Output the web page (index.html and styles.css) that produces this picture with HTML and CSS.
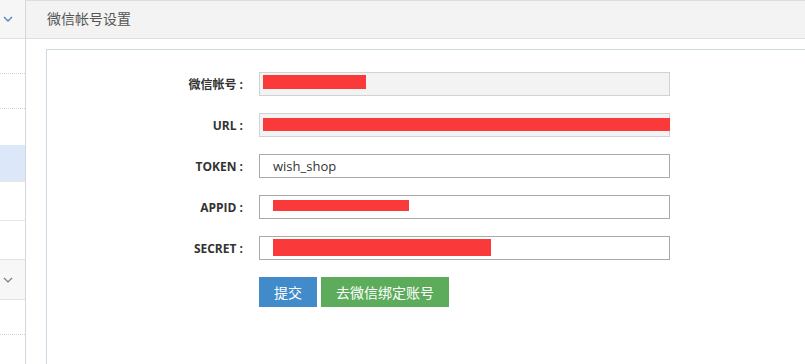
FILE: index.html
```html
<!DOCTYPE html>
<html lang="zh-CN">
  <head>
    <meta charset="UTF-8" />
    <title>微信帐号设置</title>
    <link rel="stylesheet" href="styles.css">
  </head>
  <body>
    <div class="layout">
      <!-- Left menu (mostly cut off) -->
      <aside class="sidebar">
        <div class="menu-head">
          <svg class="chev" width="10" height="6" viewBox="0 0 10 6"><path d="M1 1l4 4 4-4" fill="none" stroke="#4a87c0" stroke-width="1.3"/></svg>
        </div>
        <div class="menu-item dotted"></div>
        <div class="menu-item dotted"></div>
        <div class="menu-item gap"></div>
        <div class="menu-item active"></div>
        <div class="menu-item solid"></div>
        <div class="menu-item solid"></div>
        <div class="menu-head sub">
          <svg class="chev" width="10" height="6" viewBox="0 0 10 6"><path d="M1 1l4 4 4-4" fill="none" stroke="#777" stroke-width="1.1"/></svg>
        </div>
        <div class="menu-item dotted"></div>
      </aside>

      <main class="content">
        <div class="page-header">微信帐号设置</div>
        <div class="panel">
          <form class="form">
            <div class="form-row">
              <label>微信帐号 :</label>
              <div class="field readonly"><span class="mask" style="width:103px"></span></div>
            </div>
            <div class="form-row">
              <label>URL :</label>
              <div class="field readonly"><span class="mask url"></span></div>
            </div>
            <div class="form-row">
              <label>TOKEN :</label>
              <div class="field">wish_shop</div>
            </div>
            <div class="form-row">
              <label>APPID :</label>
              <div class="field"><span class="mask inset" style="width:136px"></span></div>
            </div>
            <div class="form-row">
              <label>SECRET :</label>
              <div class="field"><span class="mask inset tall" style="width:218px"></span></div>
            </div>
            <div class="form-actions">
              <button type="button" class="btn btn-blue">提交</button>
              <button type="button" class="btn btn-green">去微信绑定账号</button>
            </div>
          </form>
        </div>
      </main>
    </div>
  </body>
</html>
```

FILE: styles.css
```css
* {
  margin: 0;
  padding: 0;
  box-sizing: border-box;
}

body {
  font-family: "Open Sans", "Noto Sans CJK SC", sans-serif;
  font-size: 12px;
  color: #333;
  background: #fff;
}

.layout {
  display: flex;
  height: 364px;
  overflow: hidden;
}

/* sidebar */
.sidebar {
  width: 26px;
  flex-shrink: 0;
  border-right: 1px solid #d4d8dc;
}

.menu-head {
  height: 39px;
  background: #f6f6f6;
  border-bottom: 1px solid #e2e2e2;
  display: flex;
  align-items: center;
  padding-left: 3px;
}

.menu-head.sub {
  height: 41px;
  background: #f7f7f7;
  border-top: 1px solid #e2e2e2;
  color: #777;
}

.menu-item {
  height: 35px;
}

.menu-item.dotted {
  border-bottom: 1px dotted #d6d6d6;
}

.menu-item.gap {
  height: 36px;
}

.menu-item.active {
  height: 36px;
  background: #dce8fa;
}

.menu-item.solid {
  height: 39px;
  border-top: 1px solid #e6e6e6;
}

.menu-item.solid:first-of-type {
  border-top: none;
}

/* main */
.content {
  flex: 1;
  display: flex;
  flex-direction: column;
}

.page-header {
  height: 39px;
  background: #f3f3f3;
  border-top: 1px solid #dedede;
  border-bottom: 1px solid #dedede;
  padding-left: 21px;
  line-height: 34px;
  font-family: "Noto Sans CJK SC", sans-serif;
  font-size: 14px;
  color: #555;
}

.panel {
  flex: 1;
  margin: 10px 0 0 20px;
  border-top: 1px solid #cfdae0;
  border-left: 1px solid #cfdae0;
  padding-top: 22px;
}

.form-row {
  display: flex;
  align-items: center;
  height: 24px;
  margin-bottom: 17px;
}

.form-row label {
  width: 199px;
  padding-right: 3px;
  text-align: right;
  font-weight: 700;
  font-size: 12px;
  color: #333;
  white-space: pre;
}

.field {
  margin-left: 13px;
  width: 411px;
  height: 24px;
  border: 1px solid #aaa;
  background: #fff;
  padding-left: 13px;
  line-height: 22px;
  font-size: 13px;
  color: #333;
  position: relative;
}

.field.readonly {
  background: #f3f3f3;
  border-color: #d2d2d2;
  padding-left: 3px;
}

.mask {
  display: block;
  height: 14px;
  background: #fa3a3a;
  margin-top: 2px;
}

.mask.url {
  width: 407px;
  height: 13px;
  margin-top: 4px;
}

.mask.inset {
  height: 11px;
  margin-top: 4px;
}

.mask.inset.tall {
  height: 17px;
  margin-top: 2px;
}

.form-actions {
  display: flex;
  gap: 4px;
  padding-left: 212px;
}

.btn {
  height: 30px;
  border: none;
  color: #fff;
  font-family: "Noto Sans CJK SC", sans-serif;
  font-size: 14px;
  cursor: pointer;
}

.btn-blue {
  width: 58px;
  background: #428bca;
}

.btn-green {
  width: 128px;
  background: #5cac5c;
}
```
